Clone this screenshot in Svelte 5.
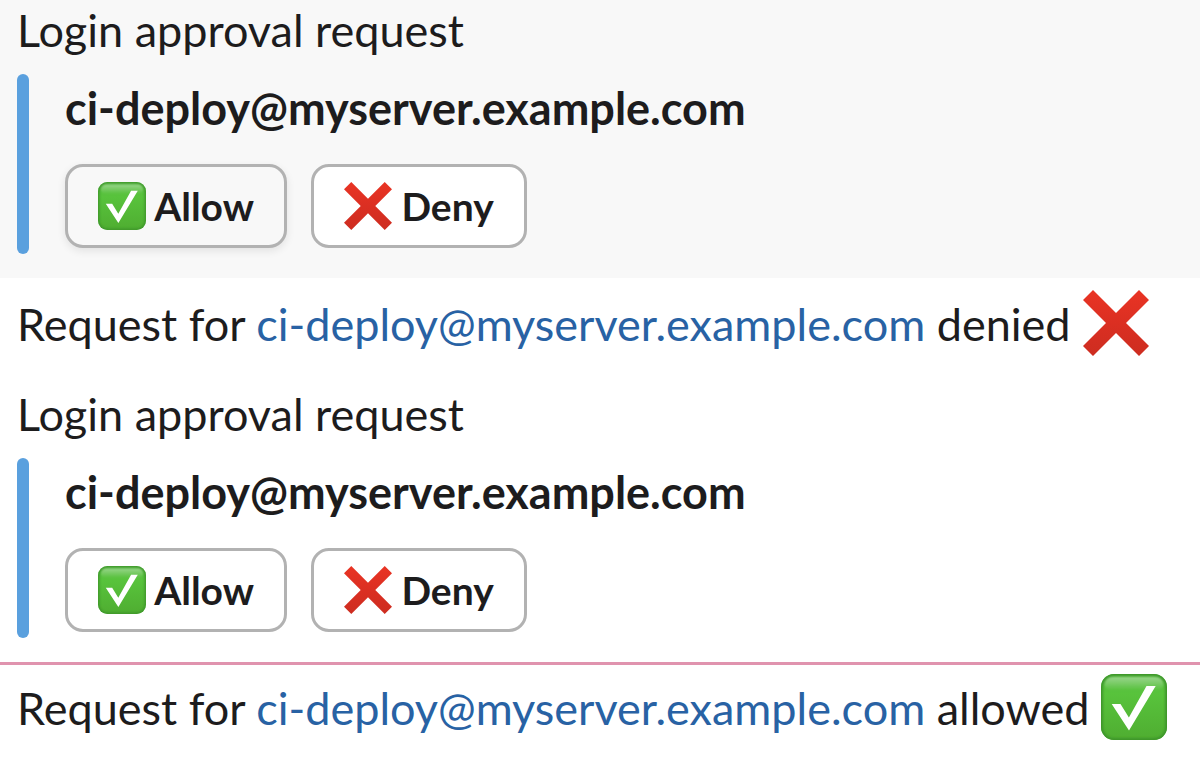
<script>
  const account = 'ci-deploy@myserver.example.com';
</script>

{#snippet check()}
  <svg class="emoji" viewBox="0 0 66 66" role="img" aria-label="Check mark">
    <defs>
      <linearGradient id="tile" x1="0" y1="0" x2="0" y2="1">
        <stop offset="0" stop-color="#52b83c" />
        <stop offset=".3" stop-color="#58c33c" />
        <stop offset="1" stop-color="#4fad31" />
      </linearGradient>
      <linearGradient id="gloss" x1="0" y1="0" x2="0" y2="1">
        <stop offset="0" stop-color="#fff" stop-opacity=".42" />
        <stop offset="1" stop-color="#fff" stop-opacity="0" />
      </linearGradient>
      <filter id="soft" x="-10%" y="-10%" width="120%" height="120%">
        <feGaussianBlur stdDeviation="1.2" />
      </filter>
      <clipPath id="shape"><rect width="66" height="66" rx="13" /></clipPath>
    </defs>
    <g clip-path="url(#shape)">
      <rect width="66" height="66" fill="url(#tile)" />
      <rect x="3" y="2.5" width="60" height="14" rx="8" fill="url(#gloss)" filter="url(#soft)" />
      <rect width="66" height="66" rx="13" fill="none" stroke="#3c962c" stroke-width="4" filter="url(#soft)" />
    </g>
    <path d="M10.7 30h8.8l8.4 13.6L45.5 12h9.2L28 56.4z" fill="#fff" />
  </svg>
{/snippet}

{#snippet cross()}
  <svg class="emoji" viewBox="0 0 66 66" role="img" aria-label="Cross mark">
    <defs>
      <linearGradient id="red" x1="0" y1="0" x2="0" y2="1">
        <stop offset="0" stop-color="#e93424" />
        <stop offset=".5" stop-color="#db2f22" />
        <stop offset="1" stop-color="#cd2d20" />
      </linearGradient>
    </defs>
    <path
      d="M10 0 33 23 56 0 66 10 43 33 66 56 56 66 33 43 10 66 0 56 23 33 0 10z"
      fill="url(#red)"
    />
  </svg>
{/snippet}

{#snippet request(active)}
  <section class="message" class:active>
    <p class="title">Login approval request</p>
    <div class="attachment">
      <div class="bar"></div>
      <div class="body">
        <strong>{account}</strong>
        <div class="actions">
          <button type="button" class:hovered={active}>
            {@render check()}<span>{' Allow'}</span>
          </button>
          <button type="button">
            {@render cross()}<span>{' Deny'}</span>
          </button>
        </div>
      </div>
    </div>
  </section>
{/snippet}

<main>
  {@render request(true)}
  <p class="result">
    <span>Request for <a href="mailto:{account}">{account}</a> denied</span>
    {@render cross()}
  </p>
  {@render request(false)}
  <p class="result unread">
    <span>Request for <a href="mailto:{account}">{account}</a> allowed</span>
    {@render check()}
  </p>
</main>

<style>
  :global(body) {
    margin: 0;
    background: #fff;
  }
  main {
    font-family: Lato, sans-serif;
    font-size: 45px;
    line-height: 66px;
    color: #1d1c1d;
  }
  p {
    margin: 0;
  }
  .message {
    padding: 16px 17px 24px;
  }
  .message.active {
    padding-top: 0;
    background: #f8f8f8;
  }
  .title {
    line-height: 60px;
  }
  .attachment {
    display: flex;
    gap: 36px;
    margin-top: 14px;
  }
  .bar {
    flex: none;
    width: 12px;
    border-radius: 6px;
    background: #5aa0de;
  }
  .body {
    padding: 1px 0 6px;
  }
  strong {
    display: block;
    font-weight: 700;
  }
  .actions {
    display: flex;
    gap: 24px;
    margin-top: 23px;
  }
  button {
    display: flex;
    align-items: center;
    height: 84px;
    padding: 0 30px;
    border: 3px solid #b2b2b2;
    border-radius: 18px;
    background: #fff;
    color: inherit;
    font: 700 39px/78px Lato, sans-serif;
    cursor: pointer;
  }
  button span {
    white-space: pre;
  }
  .hovered {
    background: #f8f8f8;
    box-shadow: 0 3px 9px rgba(0, 0, 0, 0.09);
  }
  .emoji {
    flex: none;
    width: 66px;
    height: 66px;
  }
  button .emoji {
    width: 48px;
    height: 48px;
  }
  .result {
    display: flex;
    align-items: center;
    gap: 12px;
    padding: 12px 17px;
    line-height: 68px;
  }
  .unread {
    padding-top: 9px;
    border-top: 3px solid #e093ae;
  }
  .result .emoji {
    margin-bottom: 2px;
  }
  .result + .message {
    padding-top: 14px;
  }
  a {
    color: #2862a4;
    text-decoration: none;
  }
</style>
